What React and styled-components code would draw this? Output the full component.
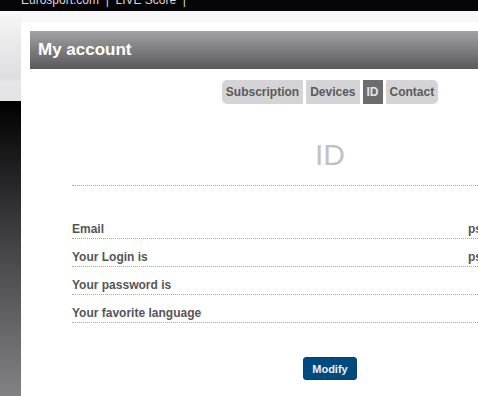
import React from "react";
import styled, { createGlobalStyle } from "styled-components";

const tabs = [
  { id: "subscription", label: "Subscription" },
  { id: "devices", label: "Devices" },
  { id: "id", label: "ID" },
  { id: "contact", label: "Contact" },
];

const fields = [
  { label: "Email", value: "psmith@mail.com" },
  { label: "Your Login is", value: "psmith" },
  { label: "Your password is", value: "" },
  { label: "Your favorite language", value: "" },
];

const GlobalStyle = createGlobalStyle`
  html, body {
    margin: 0;
    padding: 0;
    overflow: hidden;
    background: #fff;
  }
  body {
    font-family: "Liberation Sans", Arial, sans-serif;
  }
`;

const App = () => {
  return (
    <>
      <GlobalStyle />
      <TopBar>
        <TopLinks>Eurosport.com &nbsp;|&nbsp; LIVE Score &nbsp;|</TopLinks>
      </TopBar>
      <Layout>
        <Side />
        <Main>
          <Panel>
            <Header>My account</Header>
            <Content>
              <Tabs>
                {tabs.map((tab) => (
                  <Tab key={tab.id} $active={tab.id === "id"}>
                    {tab.label}
                  </Tab>
                ))}
              </Tabs>
              <Title>ID</Title>
              <Fields>
                {fields.map((field) => (
                  <Row key={field.label}>
                    <Label>{field.label}</Label>
                    <Value>{field.value}</Value>
                  </Row>
                ))}
              </Fields>
              <Actions>
                <Button>Modify</Button>
              </Actions>
            </Content>
          </Panel>
        </Main>
      </Layout>
    </>
  );
};

const TopBar = styled.div`
  height: 11px;
  background: #050508;
  overflow: hidden;
  padding-left: 21px;
`;

const TopLinks = styled.div`
  margin-top: -6px;
  font-size: 12px;
  line-height: 12px;
  color: #d8d8de;
  white-space: nowrap;
`;

const Layout = styled.div`
  display: flex;
  width: 639px;
  height: 385px;
`;

const Side = styled.div`
  width: 21px;
  flex-shrink: 0;
  background: linear-gradient(
    to bottom,
    #fbfbfc 0,
    #f6f6f7 5px,
    #ececed 25px,
    #dedee0 68px,
    #e6e6e8 70px,
    #e4e4e6 90px,
    #000 90px,
    #1c1c1e 150px,
    #4a4a4c 250px,
    #828284 385px
  );
`;

const Main = styled.div`
  flex: 1;
  padding-top: 11px;
  background: #f7f7f9;
`;

const Panel = styled.div`
  background: #fff;
  height: 100%;
  padding: 9px 9px 0;
  box-sizing: border-box;
`;

const Header = styled.h1`
  margin: 0;
  height: 38px;
  padding-left: 8px;
  display: flex;
  align-items: center;
  background: linear-gradient(to bottom, #a2a2a4, #59595b);
  color: #fff;
  font-size: 17px;
  font-weight: bold;
`;

const Content = styled.div`
  padding: 11px 42px 0;
`;

const Tabs = styled.div`
  display: flex;
  justify-content: center;
  gap: 3px;
`;

const Tab = styled.div`
  height: 24px;
  padding: 0 4px;
  display: flex;
  align-items: center;
  font-size: 12px;
  font-weight: bold;
  color: ${(p) => (p.$active ? "#e4e4e4" : "#5a5a5c")};
  background: ${(p) => (p.$active ? "#6c6c6e" : "#d4d4d6")};

  &:first-child {
    border-radius: 5px 0 0 5px;
  }
  &:last-child {
    border-radius: 0 5px 5px 0;
  }
`;

const Title = styled.h2`
  margin: 33px 0 0;
  padding-bottom: 12px;
  text-align: center;
  font-size: 30px;
  line-height: 36px;
  font-weight: normal;
  color: #c2c2c4;
  border-bottom: 1px dotted #a8a8aa;
`;

const Fields = styled.div`
  margin-top: 25px;
`;

const Row = styled.div`
  display: grid;
  grid-template-columns: 396px 1fr;
  padding-top: 11px;
  height: 16px;
  font-size: 12px;
  line-height: 14px;
  font-weight: bold;
  color: #555557;
  border-bottom: 1px dotted #a8a8aa;
`;

const Label = styled.span`
  white-space: nowrap;
`;

const Value = styled.span`
  white-space: nowrap;
  overflow: hidden;
`;

const Actions = styled.div`
  display: flex;
  justify-content: center;
  margin-top: 34px;
`;

const Button = styled.button`
  width: 54px;
  height: 23px;
  padding: 0;
  border: 1px solid #0a3f66;
  border-radius: 3px;
  background: #004a80;
  color: #eef4fa;
  font-family: "Liberation Sans", Arial, sans-serif;
  font-size: 11px;
  font-weight: bold;
  cursor: pointer;
`;

export default App;
